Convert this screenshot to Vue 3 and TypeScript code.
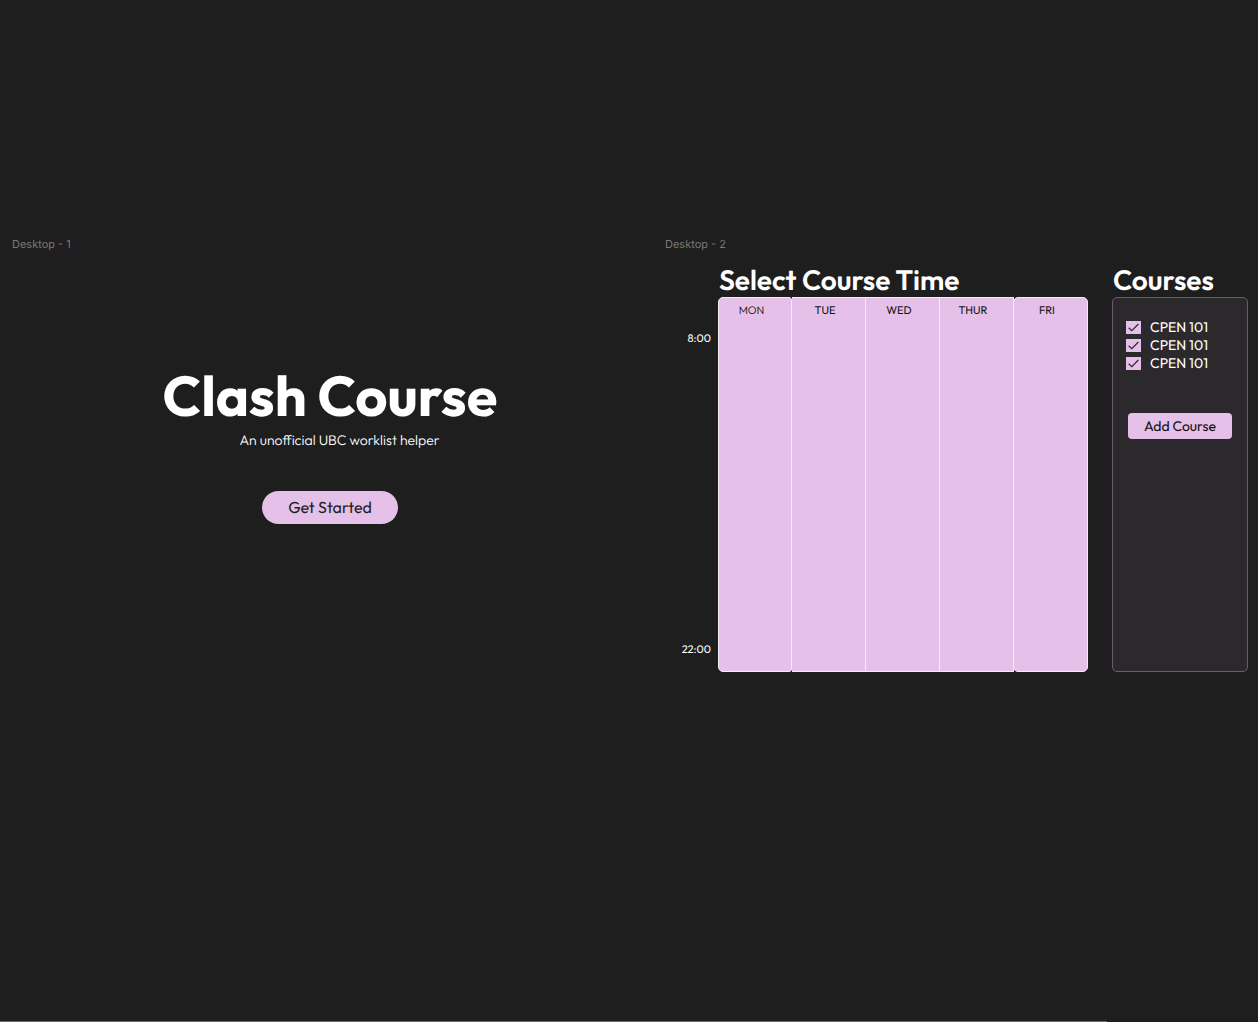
<script setup lang="ts">
import { ref } from 'vue'

interface Course {
  id: number
  name: string
  selected: boolean
}

const days: string[] = ['MON', 'TUE', 'WED', 'THUR', 'FRI']

const courses = ref<Course[]>([
  { id: 1, name: 'CPEN 101', selected: true },
  { id: 2, name: 'CPEN 101', selected: true },
  { id: 3, name: 'CPEN 101', selected: true },
])

function addCourse(): void {
  courses.value.push({ id: courses.value.length + 1, name: 'CPEN 101', selected: true })
}
</script>

<template>
  <div class="canvas">
    <div class="frames">
      <section class="frame landing">
        <p class="frame-label">Desktop - 1</p>
        <div class="hero">
          <h1>Clash Course</h1>
          <p class="tagline">An unofficial UBC worklist helper</p>
          <button type="button" class="start">Get Started</button>
        </div>
      </section>

      <section class="frame planner">
        <p class="frame-label">Desktop - 2</p>
        <div class="board">
          <div class="times">
            <span>8:00</span>
            <span>22:00</span>
          </div>
          <div class="schedule">
            <h2>Select Course Time</h2>
            <div class="week">
              <div v-for="day in days" :key="day" class="day">{{ day }}</div>
            </div>
          </div>
          <div class="courses">
            <h2>Courses</h2>
            <div class="panel">
              <div class="course-list">
                <label v-for="course in courses" :key="course.id" class="course">
                  <span class="tick">
                    <input v-model="course.selected" type="checkbox" />
                    <svg v-if="course.selected" viewBox="0 0 15 13" aria-hidden="true">
                      <path d="M2.7 6.7 L5.8 9.7 L12.4 3" />
                    </svg>
                  </span>
                  <span>{{ course.name }}</span>
                </label>
              </div>
              <button type="button" class="add" @click="addCourse">Add Course</button>
            </div>
          </div>
        </div>
      </section>
    </div>
    <div class="edge"></div>
  </div>
</template>

<style>
body {
  margin: 0;
  background: #1e1e1e;
}
</style>

<style scoped>
.canvas {
  display: flex;
  flex-direction: column;
  box-sizing: border-box;
  min-height: 100vh;
  background: #1e1e1e;
  color: #fff;
  font-family: Outfit, Lato, sans-serif;
  text-rendering: geometricPrecision;
}

h1,
h2,
p {
  margin: 0;
}

button {
  border: 0;
  padding: 0;
  font-family: inherit;
  text-rendering: inherit;
  background: #e5c0e8;
  cursor: pointer;
}

.frames {
  flex: 1;
  display: grid;
  grid-template-columns: 330fr 299fr;
  padding-top: 236px;
}

.frame-label {
  color: #7a7a7a;
  font: 11px/16px Inter, sans-serif;
}

.landing .frame-label {
  padding-left: 12px;
}

.hero {
  display: flex;
  flex-direction: column;
  align-items: center;
  padding-top: 108px;
}

h1 {
  font-size: 56px;
  font-weight: 700;
  line-height: 72px;
}

.tagline {
  padding-left: 19px;
  font-size: 14px;
  font-weight: 300;
  line-height: 16px;
}

.start {
  width: 136px;
  height: 33px;
  margin-top: 43px;
  padding-top: 1px;
  border-radius: 17px;
  color: #1e1e1e;
  font-size: 16px;
  font-weight: 400;
}

.planner {
  padding: 0 10px 0 5px;
}

.board {
  display: grid;
  grid-template-columns: 46px 401fr 136fr;
  padding-top: 9px;
}

.times {
  display: flex;
  flex-direction: column;
  justify-content: space-between;
  align-items: flex-end;
  padding: 69px 0 15px;
  font-size: 11px;
  line-height: 16px;
}

.schedule {
  padding: 0 24px 0 7px;
}

h2 {
  padding: 4px 0 0 1px;
  font-size: 28px;
  font-weight: 600;
  line-height: 32px;
  white-space: nowrap;
}

.week {
  display: grid;
  grid-template-columns: repeat(5, 1fr);
  height: 375px;
}

.day {
  padding: 4px 7px 0 0;
  border: solid #f7ebf8;
  border-width: 1px 1px 1px 0;
  background: #e5c0e8;
  color: #111;
  font-size: 11px;
  line-height: 16px;
  text-align: center;
}

.day:first-child {
  border-left-width: 1px;
  border-radius: 5px 3px 3px 5px;
  font-weight: 300;
}

.day:last-child {
  margin-left: -1px;
  border-left-width: 1px;
  border-radius: 5px;
}

.panel {
  box-sizing: border-box;
  min-height: 375px;
  padding: 21px 15px 0 13px;
  border: 1px solid #6d5a70;
  border-radius: 5px;
  background: #2c292c;
}

.course-list {
  display: grid;
  grid-auto-rows: 1fr;
  min-height: 53px;
}

.course {
  display: flex;
  align-items: center;
  gap: 9px;
  font-size: 14px;
  line-height: 17px;
  white-space: nowrap;
}

.tick {
  display: grid;
  width: 15px;
  height: 13px;
}

.tick input,
.tick svg {
  grid-area: 1 / 1;
  width: 15px;
  height: 13px;
}

.tick input {
  appearance: none;
  margin: 0;
  background: #e5c0e8;
}

.tick svg {
  fill: none;
  stroke: #2c292c;
  stroke-width: 1.2;
  pointer-events: none;
}

.add {
  display: block;
  width: 104px;
  height: 26px;
  margin: 41px 0 0 2px;
  border-radius: 4px;
  color: #111;
  font-size: 14px;
}

.edge {
  width: 88%;
  height: 1px;
  background: #6b696b;
}
</style>
